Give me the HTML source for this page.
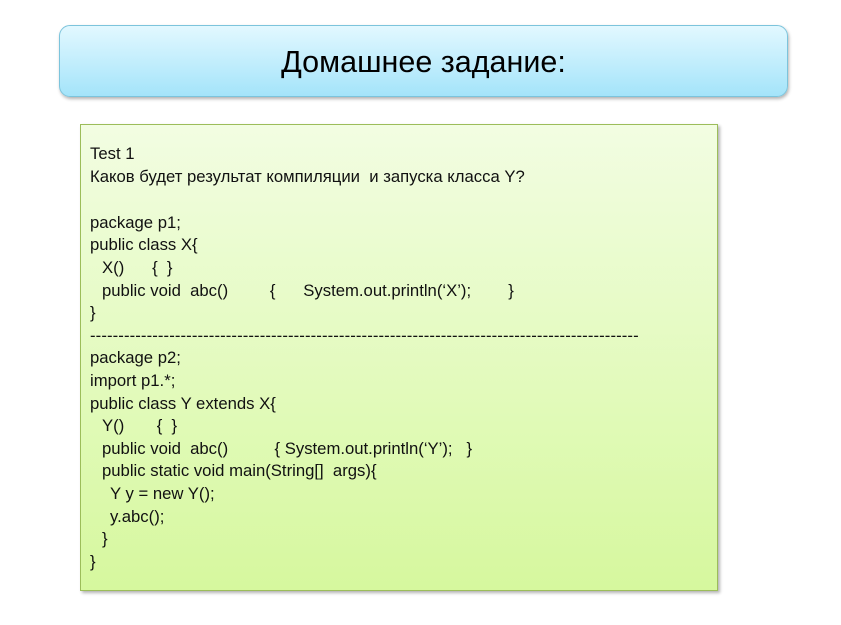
<!DOCTYPE html>
<html><head><meta charset="utf-8"><style>
body{margin:0;width:841px;height:625px;background:#fff;position:relative;overflow:hidden;font-family:"Liberation Sans","DejaVu Sans",sans-serif}
.t{position:absolute;left:59px;top:25px;width:727px;height:70px;border:1px solid #7cc4dc;border-radius:11px;background:linear-gradient(#e2f8ff,#a4e4fa);box-shadow:1px 2px 3px rgba(0,0,0,.3);text-align:center;line-height:72px;font-size:30.5px;color:#000}
.b{position:absolute;left:80px;top:124px;width:636px;height:465px;border:1px solid #9cbd5a;background:linear-gradient(#f2fde2,#d6f89e);box-shadow:2px 2px 3px rgba(0,0,0,.3)}
.l{position:absolute;left:90px;white-space:pre;font-size:16.7px;color:#111;letter-spacing:0px;line-height:18px}
.i{left:102px}.j{left:110px}
</style></head><body>
<div class="t">Домашнее задание:</div>
<div class="b"></div>
<div class="l" style="top:145px">Test 1</div>
<div class="l" style="top:168px">Каков будет результат компиляции  и запуска класса Y?</div>
<div class="l" style="top:214px">package p1;</div>
<div class="l" style="top:236px">public class X{</div>
<div class="l i" style="top:259px">X()      {  }</div>
<div class="l i" style="top:282px">public void  abc()         {      System.out.println(‘X’);        }</div>
<div class="l" style="top:304px">}</div>
<div class="l" style="top:327px;letter-spacing:0.1px">-------------------------------------------------------------------------------------------------</div>
<div class="l" style="top:349px">package p2;</div>
<div class="l" style="top:372px">import p1.*;</div>
<div class="l" style="top:395px">public class Y extends X{</div>
<div class="l i" style="top:417px">Y()       {  }</div>
<div class="l i" style="top:440px">public void  abc()          { System.out.println(‘Y’);   }</div>
<div class="l i" style="top:462px">public static void main(String[]  args){</div>
<div class="l j" style="top:485px">Y y = new Y();</div>
<div class="l j" style="top:508px">y.abc();</div>
<div class="l i" style="top:530px">}</div>
<div class="l" style="top:553px">}</div>
</body></html>
